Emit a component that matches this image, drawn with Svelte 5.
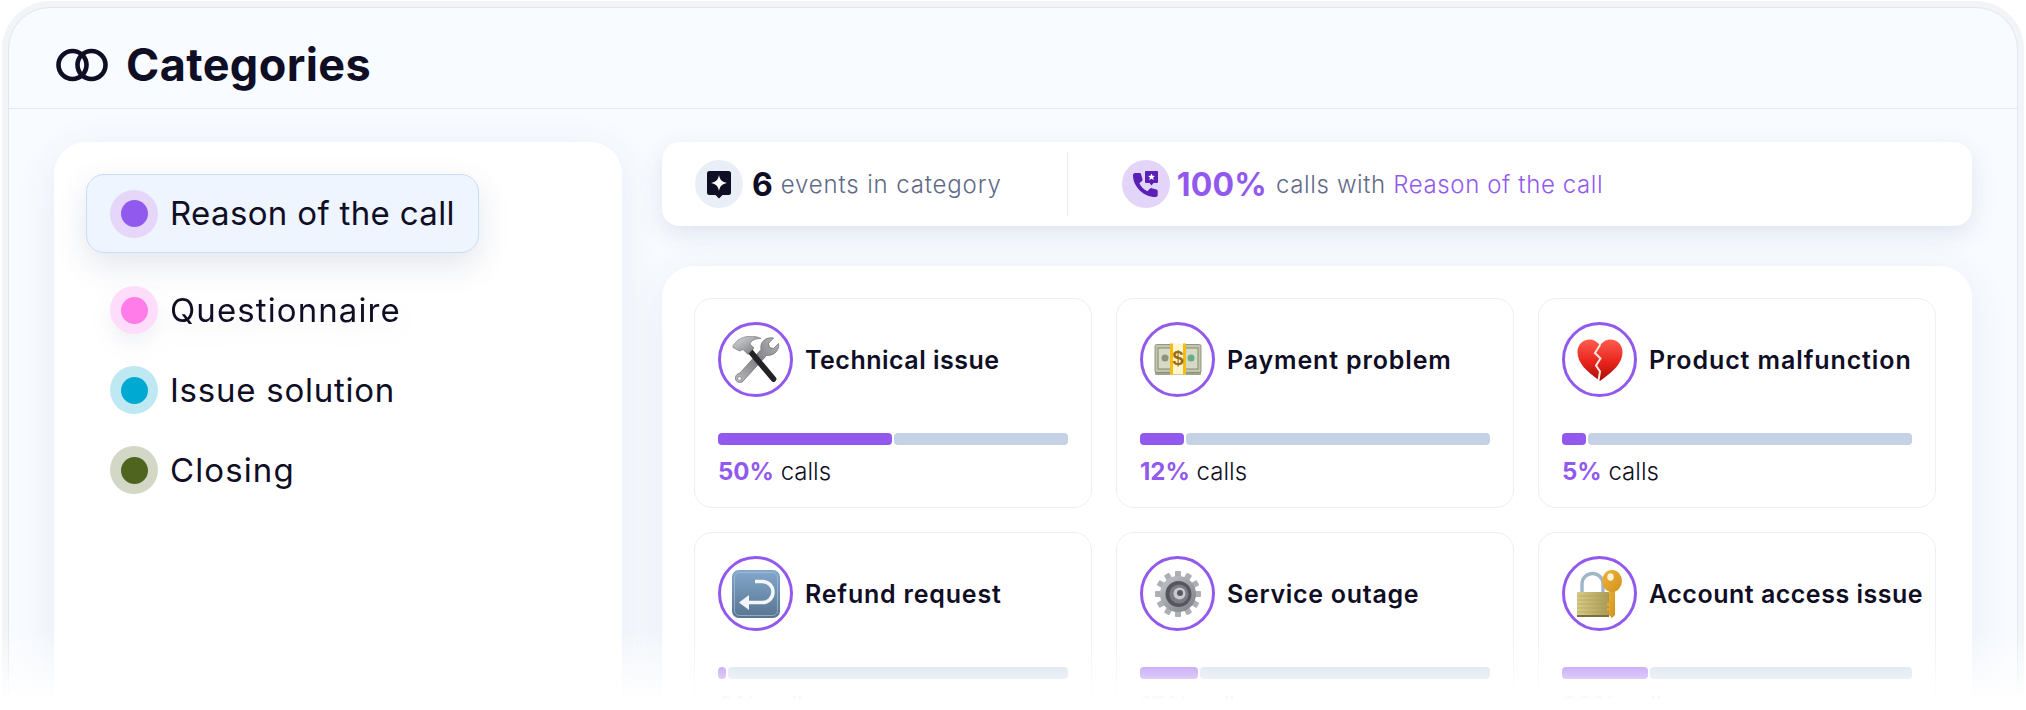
<script>
  const menu = [
    { label: 'Reason of the call', dot: '#9259ee', halo: '#e5d6fa', active: true, track: 0.35 },
    { label: 'Questionnaire', dot: '#ff7ce9', halo: '#ffdcf9', soft: true, track: 1.1 },
    { label: 'Issue solution', dot: '#00a9d2', halo: '#bee9f3', track: 0.75 },
    { label: 'Closing', dot: '#4f651f', halo: '#d2d8c5', track: 1.1 }
  ];
  const cards = [
    { id: 'tools', title: 'Technical issue', pct: 50, fill: 49.7, track: 0.5 },
    { id: 'money', title: 'Payment problem', pct: 12, fill: 12.6, track: 0.85 },
    { id: 'heart', title: 'Product malfunction', pct: 5, fill: 6.9, track: 0.9 },
    { id: 'back', title: 'Refund request', pct: 3, fill: 2.3, track: 0.8 },
    { id: 'gear', title: 'Service outage', pct: 15, fill: 16.5, track: 0.7 },
    { id: 'lock', title: 'Account access issue', pct: 23, fill: 24.6, track: 0.5 }
  ];
  const teeth = Array.from({ length: 12 }, (_, i) => i * 30);
</script>

<div class="page">
  <section class="window">
    <header class="head">
      <svg class="rings" viewBox="0 0 52 34" fill="none" stroke="#0f0e25" stroke-width="4.6">
        <circle cx="16.5" cy="17" r="14" />
        <circle cx="35.5" cy="17" r="14" />
      </svg>
      <h1>Categories</h1>
    </header>

    <div class="content">
      <nav class="side">
        {#each menu as m}
          <div class="item" class:active={m.active} class:soft={m.soft}>
            <span class="halo" style="background:{m.halo}"><span class="dot" style="background:{m.dot}"></span></span>
            <span class="label" style="letter-spacing:{m.track}px">{m.label}</span>
          </div>
        {/each}
      </nav>

      <main class="main">
        <div class="stats">
          <span class="sicon grey">
            <svg viewBox="0 0 48 48" width="48" height="48">
              <path d="M14.5 11h19a2.5 2.5 0 0 1 2.5 2.5v19a2.5 2.5 0 0 1-2.5 2.5H27.5L24 38.500 20.500 35H14.500a2.500 2.500 0 0 1-2.500-2.500v-19a2.500 2.500 0 0 1 2.500-2.500z" fill="#0f0e25" />
              <path d="M24 15c1 5 3 7 8 8-5 1-7 3-8 8-1-5-3-7-8-8 5-1 7-3 8-8z" fill="#fff" />
            </svg>
          </span>
          <b class="num">6</b>
          <span class="txt wide">events in category</span>
          <span class="divider"></span>
          <span class="sicon violet">
            <svg viewBox="0 0 48 48" width="48" height="48">
              <path d="M13 13h4.500c.8 0 1.400.5 1.600 1.200l1.400 5c.2.700 0 1.300-.5 1.800l-2.600 2.300c1.700 3.500 4.400 6.200 8 8l2.400-2.600c.5-.5 1.100-.7 1.800-.5l4.900 1.400c.7.200 1.200.9 1.200 1.600V35c0 1.200-1 2-2.200 2C21.500 37 11 26.500 11 15.200 11 14 11.800 13 13 13z" fill="#5a20b6" />
              <path d="M24 11h11a1 1 0 0 1 1 1v10a1 1 0 0 1-1 1h-3.500L29.500 25.500 27.500 23H24a1 1 0 0 1-1-1V12a1 1 0 0 1 1-1z" fill="#5a20b6" />
              <path d="M29.500 13.500l1 2.300 2.400.2-1.800 1.600.6 2.400-2.200-1.300-2.200 1.300.6-2.400-1.800-1.600 2.400-.2z" fill="#fff" />
            </svg>
          </span>
          <b class="num purple">100%</b>
          <span class="txt">calls with <span class="purple-t">Reason of the call</span></span>
        </div>

        <div class="panel">
          {#each cards as c}
            <article class="card">
              <div class="top">
                <span class="badge">
                  {#if c.id === 'tools'}
                    <svg viewBox="0 0 48 48" width="48" height="48">
                      <defs>
                        <linearGradient id="st" x1="0" y1="1" x2="1" y2="0"><stop offset="0" stop-color="#bdbdc0" /><stop offset=".5" stop-color="#808186" /><stop offset="1" stop-color="#b4b6b9" /></linearGradient>
                        <linearGradient id="hd" x1="0" y1="0" x2="1" y2="1"><stop offset="0" stop-color="#dcdde0" /><stop offset="1" stop-color="#6d6e73" /></linearGradient>
                      </defs>
                      <path d="M41.500 2 36.500 7.500l1 4 4 1 5-5c1.500 5.500-3.500 12.500-12 12L12 44c-2 4-8 3-8.500-1-.5-4 2.500-5.500 4.500-6l21-23.500C27.500 6 34 .5 41.500 2z" fill="url(#st)" stroke="#55565a" stroke-width=".6" />
                      <circle cx="7.500" cy="42.500" r="1.900" fill="#fff" stroke="#55565a" stroke-width=".5" />
                      <path d="M18 15 41.500 43" stroke="#232325" stroke-width="5.800" stroke-linecap="round" />
                      <path d="M1 9.500 6 4c7-4.500 16-5 23-1.500-5.500 0-10 2-11 5.500L22 12l-6 6.500-5-5L7.500 15 1 11.500z" fill="url(#hd)" stroke="#55565a" stroke-width=".5" />
                    </svg>
                  {:else if c.id === 'money'}
                    <svg viewBox="0 0 48 48" width="48" height="48">
                      <rect x="1" y="35" width="46" height="4" rx="1" fill="#9ea38c" />
                      <rect x="1" y="8.500" width="46" height="28" rx="1.500" fill="#c2c6ad" stroke="#7f8570" stroke-width=".8" />
                      <rect x="4" y="12" width="40" height="21" fill="#d6d9c3" stroke="#858a73" stroke-width="1" />
                      <circle cx="11" cy="22" r="3.500" fill="#8d9180" />
                      <circle cx="37" cy="22" r="3.500" fill="#68ad8a" />
                      <rect x="16" y="7.500" width="16" height="31" fill="#fff6d0" />
                      <rect x="16" y="7.500" width="3" height="31" fill="#f6bd10" />
                      <rect x="29" y="7.500" width="3" height="31" fill="#f6bd10" />
                      <text x="24" y="29" text-anchor="middle" font-family="Liberation Sans, sans-serif" font-weight="700" font-size="20" fill="#9a6a14">$</text>
                    </svg>
                  {:else if c.id === 'heart'}
                    <svg viewBox="0 0 48 48" width="48" height="48">
                      <defs><linearGradient id="he" x1="0" y1="0" x2="0" y2="1"><stop offset="0" stop-color="#ff5c50" /><stop offset=".55" stop-color="#e8241c" /><stop offset="1" stop-color="#a80d08" /></linearGradient></defs>
                      <path d="M24 45C10 35 1.500 27 1.500 16 1.500 8.500 7 3.500 13.500 3.500 18 3.500 22 6 24 10c2-4 6-6.500 10.500-6.500C41 3.500 46.500 8.500 46.500 16 46.500 27 38 35 24 45z" fill="url(#he)" />
                      <path d="M24 9l-5 8 5.500 5.500L20 29.500l4 6-1.500 9" fill="none" stroke="#ffe9df" stroke-width="2" />
                    </svg>
                  {:else if c.id === 'back'}
                    <svg viewBox="0 0 48 48" width="48" height="48">
                      <defs><linearGradient id="bk" x1="0" y1="0" x2="0" y2="1"><stop offset="0" stop-color="#83a8cc" /><stop offset="1" stop-color="#587490" /></linearGradient></defs>
                      <rect x="0" y="0" width="48" height="48" rx="7" fill="url(#bk)" />
                      <rect x="2.500" y="2.500" width="43" height="43" rx="5" fill="none" stroke="#a4c0da" stroke-width="1" opacity=".7" />
                      <path d="M23 11.500h7.500a10 10 0 0 1 0 21H15" fill="none" stroke="#f3f6f9" stroke-width="3.600" />
                      <path d="M7 32.500 17 25v15z" fill="#f3f6f9" />
                    </svg>
                  {:else if c.id === 'gear'}
                    <svg viewBox="0 0 48 48" width="48" height="48">
                      <defs><linearGradient id="gr" x1="0" y1="0" x2="1" y2="1"><stop offset="0" stop-color="#c6c7cc" /><stop offset="1" stop-color="#7d7e85" /></linearGradient></defs>
                      {#each teeth as t}
                        <rect x="21" y="1" width="6" height="9" rx="1" fill="#aeafb5" transform="rotate({t} 24 24)" />
                      {/each}
                      <circle cx="24" cy="24" r="18" fill="url(#gr)" />
                      <circle cx="24.500" cy="24" r="13" fill="#55565e" />
                      <circle cx="25" cy="24" r="9.500" fill="#7b7c84" />
                      <circle cx="25.500" cy="23.500" r="6" fill="#c9cace" />
                      <circle cx="26" cy="23" r="3" fill="#5a5b62" />
                    </svg>
                  {:else}
                    <svg viewBox="0 0 48 48" width="48" height="48">
                      <defs>
                        <linearGradient id="lk" x1="0" y1="0" x2="1" y2="0"><stop offset="0" stop-color="#d8cb86" /><stop offset="1" stop-color="#a99a55" /></linearGradient>
                        <linearGradient id="kk" x1="0" y1="0" x2="1" y2="1"><stop offset="0" stop-color="#eeb43a" /><stop offset="1" stop-color="#d2921c" /></linearGradient>
                      </defs>
                      <path d="M6 23V14a10.500 10.500 0 0 1 21 0v9" fill="none" stroke="#9fb6c8" stroke-width="3.400" />
                      <rect x="1" y="22" width="32" height="25" rx="1" fill="url(#lk)" />
                      <path d="M1 26h32M1 30h32M1 34h32M1 38h32M1 42h32" stroke="#a79954" stroke-width=".7" opacity=".7" />
                      <rect x="1" y="45" width="32" height="2" fill="#7a6e3c" />
                      <path d="M33 18h6v27l-3 3-3-3v-4h-2v-3h2v-2h-2v-3h2z" fill="url(#kk)" />
                      <ellipse cx="36" cy="11" rx="10" ry="11" fill="url(#kk)" />
                      <ellipse cx="34.500" cy="7" rx="3.200" ry="3.800" fill="#fff5df" />
                    </svg>
                  {/if}
                </span>
                <h2 style="letter-spacing:{c.track}px">{c.title}</h2>
              </div>
              <div class="bar">
                <span class="fill" style="width:{c.fill}%"></span>
                <span class="rest"></span>
              </div>
              <p class="share"><b>{c.pct}%</b> calls</p>
            </article>
          {/each}
        </div>
      </main>
    </div>
  </section>
  <div class="fade"></div>
</div>

<style>
  :global(body) { margin: 0; background: #fff; overflow: hidden; }
  .page {
    position: relative;
    height: 710px;
    overflow: hidden;
    padding: 7px 8px 0;
    box-sizing: border-box;
    font-family: Inter, "Noto Sans", sans-serif;
    color: #0f0e25;
  }
  .window {
    height: 760px;
    box-sizing: border-box;
    border: 1px solid #e3e6ee;
    border-radius: 42px 42px 0 0;
    box-shadow: 0 0 0 6px #f2f4f7;
    background: #f8fbff;
  }
  .head {
    height: 101px;
    box-sizing: border-box;
    display: flex;
    align-items: center;
    gap: 18px;
    padding-left: 47px;
    padding-top: 13px;
    border-bottom: 1px solid #e3e8f2;
  }
  .rings { width: 52px; height: 34px; }
  h1 { margin: 0; font-size: 45px; font-weight: 700; letter-spacing: 0.4px; line-height: 1; }
  .content {
    display: flex;
    gap: 40px;
    padding: 33px 45px 0;
    align-items: stretch;
  }
  .side {
    width: 568px;
    height: 700px;
    box-sizing: border-box;
    flex: none;
    padding: 32px;
    background: #fff;
    border-radius: 32px;
    box-shadow: 0 8px 40px rgba(70, 90, 140, 0.09);
  }
  .item {
    display: flex;
    align-items: center;
    gap: 12px;
    height: 80px;
    box-sizing: border-box;
    padding-left: 24px;
    font-size: 33px;
    width: 393px;
  }
  .item.active {
    height: 79px;
    margin-bottom: 17px;
    padding-left: 23px;
    background: #eff5ff;
    border: 1px solid #c9dcfb;
    border-radius: 18px;
    box-shadow: 0 12px 32px rgba(60, 80, 130, 0.14);
  }
  .item.soft { filter: drop-shadow(0 10px 10px rgba(60, 80, 130, 0.08)); width: 340px; }
  .halo {
    width: 48px;
    height: 48px;
    border-radius: 50%;
    display: flex;
    align-items: center;
    justify-content: center;
    flex: none;
  }
  .dot { width: 27px; height: 27px; border-radius: 50%; }
  .label { white-space: nowrap; line-height: 1; }
  .main { flex: none; width: 1310px; }
  .stats {
    height: 84px;
    box-sizing: border-box;
    display: flex;
    align-items: center;
    padding-left: 33px;
    background: #fff;
    border-radius: 18px;
    box-shadow: 0 8px 24px rgba(60, 80, 120, 0.13);
    margin-bottom: 40px;
    white-space: nowrap;
  }
  .sicon { width: 48px; height: 48px; border-radius: 50%; flex: none; display: flex; }
  .sicon.grey { background: #e9eef7; }
  .sicon.violet { background: #e3d5fa; }
  .num { font-size: 32px; font-weight: 700; margin-left: 9px; }
  .num.purple { color: #9259ee; margin-left: 7px; letter-spacing: 0.2px; }
  .txt { font-size: 24px; font-weight: 300; letter-spacing: 0.62px; color: #5f6a86; margin-left: 9px; }
  .txt.wide { letter-spacing: 0.85px; margin-left: 8px; }
  .purple-t { color: #9259ee; }
  .divider { width: 1px; height: 64px; background: #e6eaf2; margin: 0 54px 0 65px; flex: none; }
  .panel {
    display: grid;
    grid-template-columns: repeat(3, 398px);
    gap: 24px;
    padding: 32px 35px 32px 32px;
    background: #fff;
    border-radius: 32px;
    box-shadow: 0 8px 40px rgba(70, 90, 140, 0.09);
  }
  .card {
    height: 210px;
    box-sizing: border-box;
    padding: 23px;
    border: 1px solid #ebeff8;
    border-radius: 18px;
  }
  .top { display: flex; align-items: center; gap: 12px; }
  .badge {
    width: 75px;
    height: 75px;
    box-sizing: border-box;
    flex: none;
    border: 3.5px solid #9259ee;
    border-radius: 50%;
    display: flex;
    align-items: center;
    justify-content: center;
  }
  h2 { margin: 0; font-size: 25px; font-weight: 600; white-space: nowrap; }
  .bar { display: flex; gap: 2px; height: 12px; margin-top: 36px; }
  .fill { background: #9259ee; border-radius: 4px; flex: none; }
  .rest { flex: 1; background: #c5d2e6; border-radius: 4px; }
  .share { margin: 12px 0 0; font-size: 24px; line-height: 30px; font-weight: 300; }
  .share b { color: #9259ee; font-weight: 700; }
  .fade {
    position: absolute;
    left: 0;
    right: 0;
    bottom: 0;
    height: 80px;
    background: linear-gradient(to bottom, rgba(255, 255, 255, 0), #fff 88%);
    pointer-events: none;
  }
</style>
